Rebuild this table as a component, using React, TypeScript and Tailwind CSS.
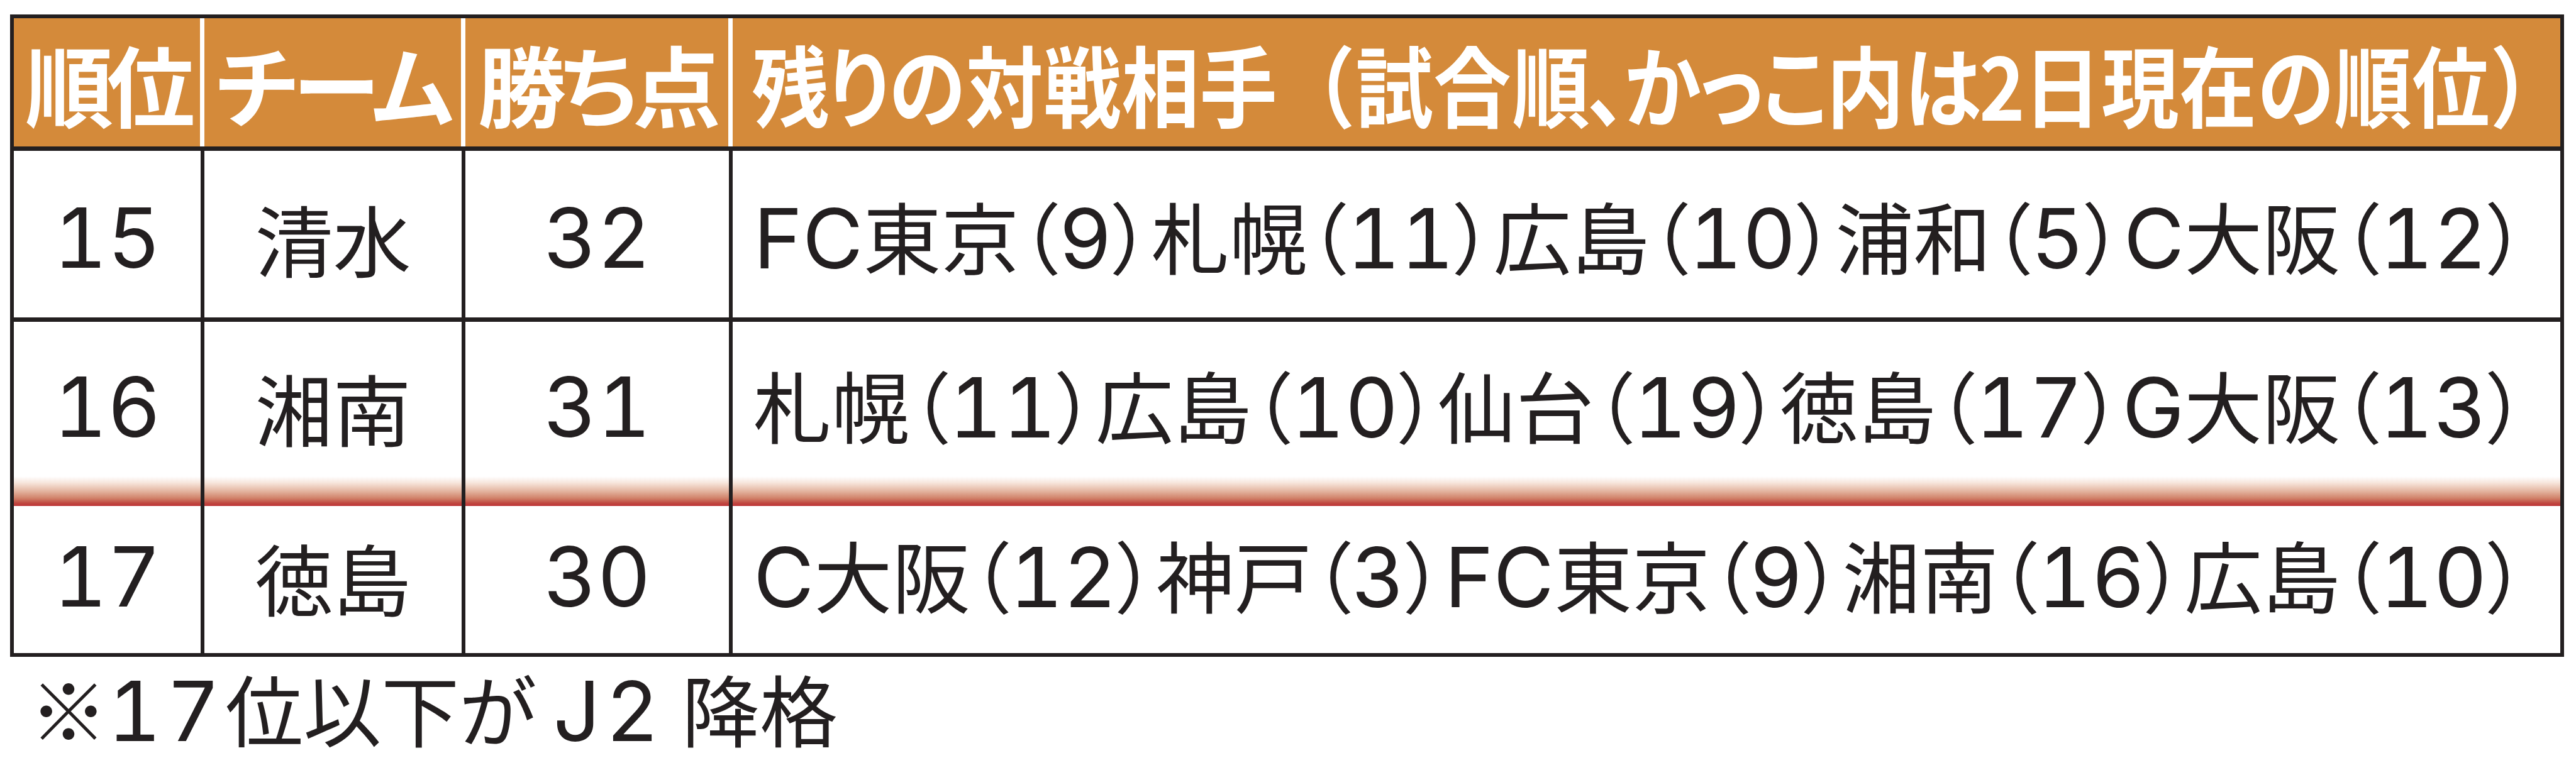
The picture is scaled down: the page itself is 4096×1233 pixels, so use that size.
import React from 'react';

const ASCII_BODY = "font-['Inter',sans-serif] text-[132px] [font-feature-settings:'tnum']";
const ASCII_NOTE = "font-['Inter',sans-serif] text-[132px] tracking-[8px] [font-feature-settings:'tnum']";

function Mixed({ text, asciiClass }: { text: string; asciiClass: string }) {
  const parts = text.split(/([0-9A-Za-z]+)/).filter(Boolean);
  return (
    <>
      {parts.map((p, i) =>
        /^[0-9A-Za-z]+$/.test(p) ? (
          <span key={i} className={asciiClass}>
            {p}
          </span>
        ) : (
          <span key={i}>{p}</span>
        )
      )}
    </>
  );
}

// headline in the orange bar is set condensed, one glyph at a time
const headline = Array.from('残りの対戦相手（試合順、かっこ内は2日現在の順位）');

const rows = [
  {
    rank: '15',
    team: '清水',
    pts: '32',
    rest: 'FC東京（9）札幌（11）広島（10）浦和（5）C大阪（12）',
    row: 'h-[272px] border-b-[7px] border-[#231f20]',
    pad: 'pt-[10px]',
  },
  {
    rank: '16',
    team: '湘南',
    pts: '31',
    rest: '札幌（11）広島（10）仙台（19）徳島（17）G大阪（13）',
    row: 'h-[293px] bg-[linear-gradient(to_bottom,#ffffff_246px,#f7e6dc_256px,#e4b6a2_269px,#d08068_281px,#c14a42_288px,#bd3336_293px)]',
    pad: 'pb-[24px]',
  },
  {
    rank: '17',
    team: '徳島',
    pts: '30',
    rest: 'C大阪（12）神戸（3）FC東京（9）湘南（16）広島（10）',
    row: 'h-[234px]',
    pad: 'pb-[10px]',
  },
];

const App = () => {
  return (
    <div className="min-h-screen bg-white pt-[23px] pl-[16px] text-[#231f20] font-['Noto_Sans_CJK_JP','Noto_Sans_CJK_SC',sans-serif] [font-feature-settings:'palt']">
      <div className="w-[4061px] border-[6px] border-[#231f20]">
        {/* header */}
        <div className="grid h-[211px] grid-cols-[303px_415px_425px_1fr] bg-[#d48a3a] text-white font-bold text-[140px] leading-none border-b-[7px] border-[#231f20]">
          <div className="flex items-center justify-center border-r-[7px] border-white tracking-[-10px]">順位</div>
          <div className="flex items-center justify-center border-r-[7px] border-white tracking-[-6px]">チーム</div>
          <div className="flex items-center justify-center border-r-[7px] border-white tracking-[-8px]">勝ち点</div>
          <div className="flex items-center pl-[30px]">
            <div className="whitespace-nowrap">
              {headline.map((c, i) => (
                <span
                  key={i}
                  className={
                    c === '（' || c === '）'
                      ? 'inline-block -mx-[8px] scale-x-[0.88] [font-feature-settings:normal]'
                      : 'inline-block -mx-[8px] scale-x-[0.88]'
                  }
                >
                  {c}
                </span>
              ))}
            </div>
          </div>
        </div>

        {/* body rows */}
        {rows.map((r) => (
          <div key={r.rank} className={`grid grid-cols-[303px_415px_425px_1fr] text-[124px] leading-none ${r.row}`}>
            <div className={`flex items-center justify-center border-r-[6px] border-[#231f20] ${r.pad}`}>
              <Mixed text={r.rank} asciiClass={ASCII_BODY} />
            </div>
            <div className={`flex items-center justify-center border-r-[6px] border-[#231f20] ${r.pad}`}>
              {r.team}
            </div>
            <div className={`flex items-center justify-center border-r-[6px] border-[#231f20] ${r.pad}`}>
              <Mixed text={r.pts} asciiClass={ASCII_BODY} />
            </div>
            <div className={`flex items-center pl-[33px] pr-[54px] ${r.pad}`}>
              <div className="w-full text-justify [text-align-last:justify]">
                <Mixed text={r.rest} asciiClass={ASCII_BODY} />
              </div>
            </div>
          </div>
        ))}
      </div>

      <div className="ml-[31px] mt-[18px] text-[124px] leading-none">
        <Mixed text="※17位以下が J2 降格" asciiClass={ASCII_NOTE} />
      </div>
    </div>
  );
};

export default App;
